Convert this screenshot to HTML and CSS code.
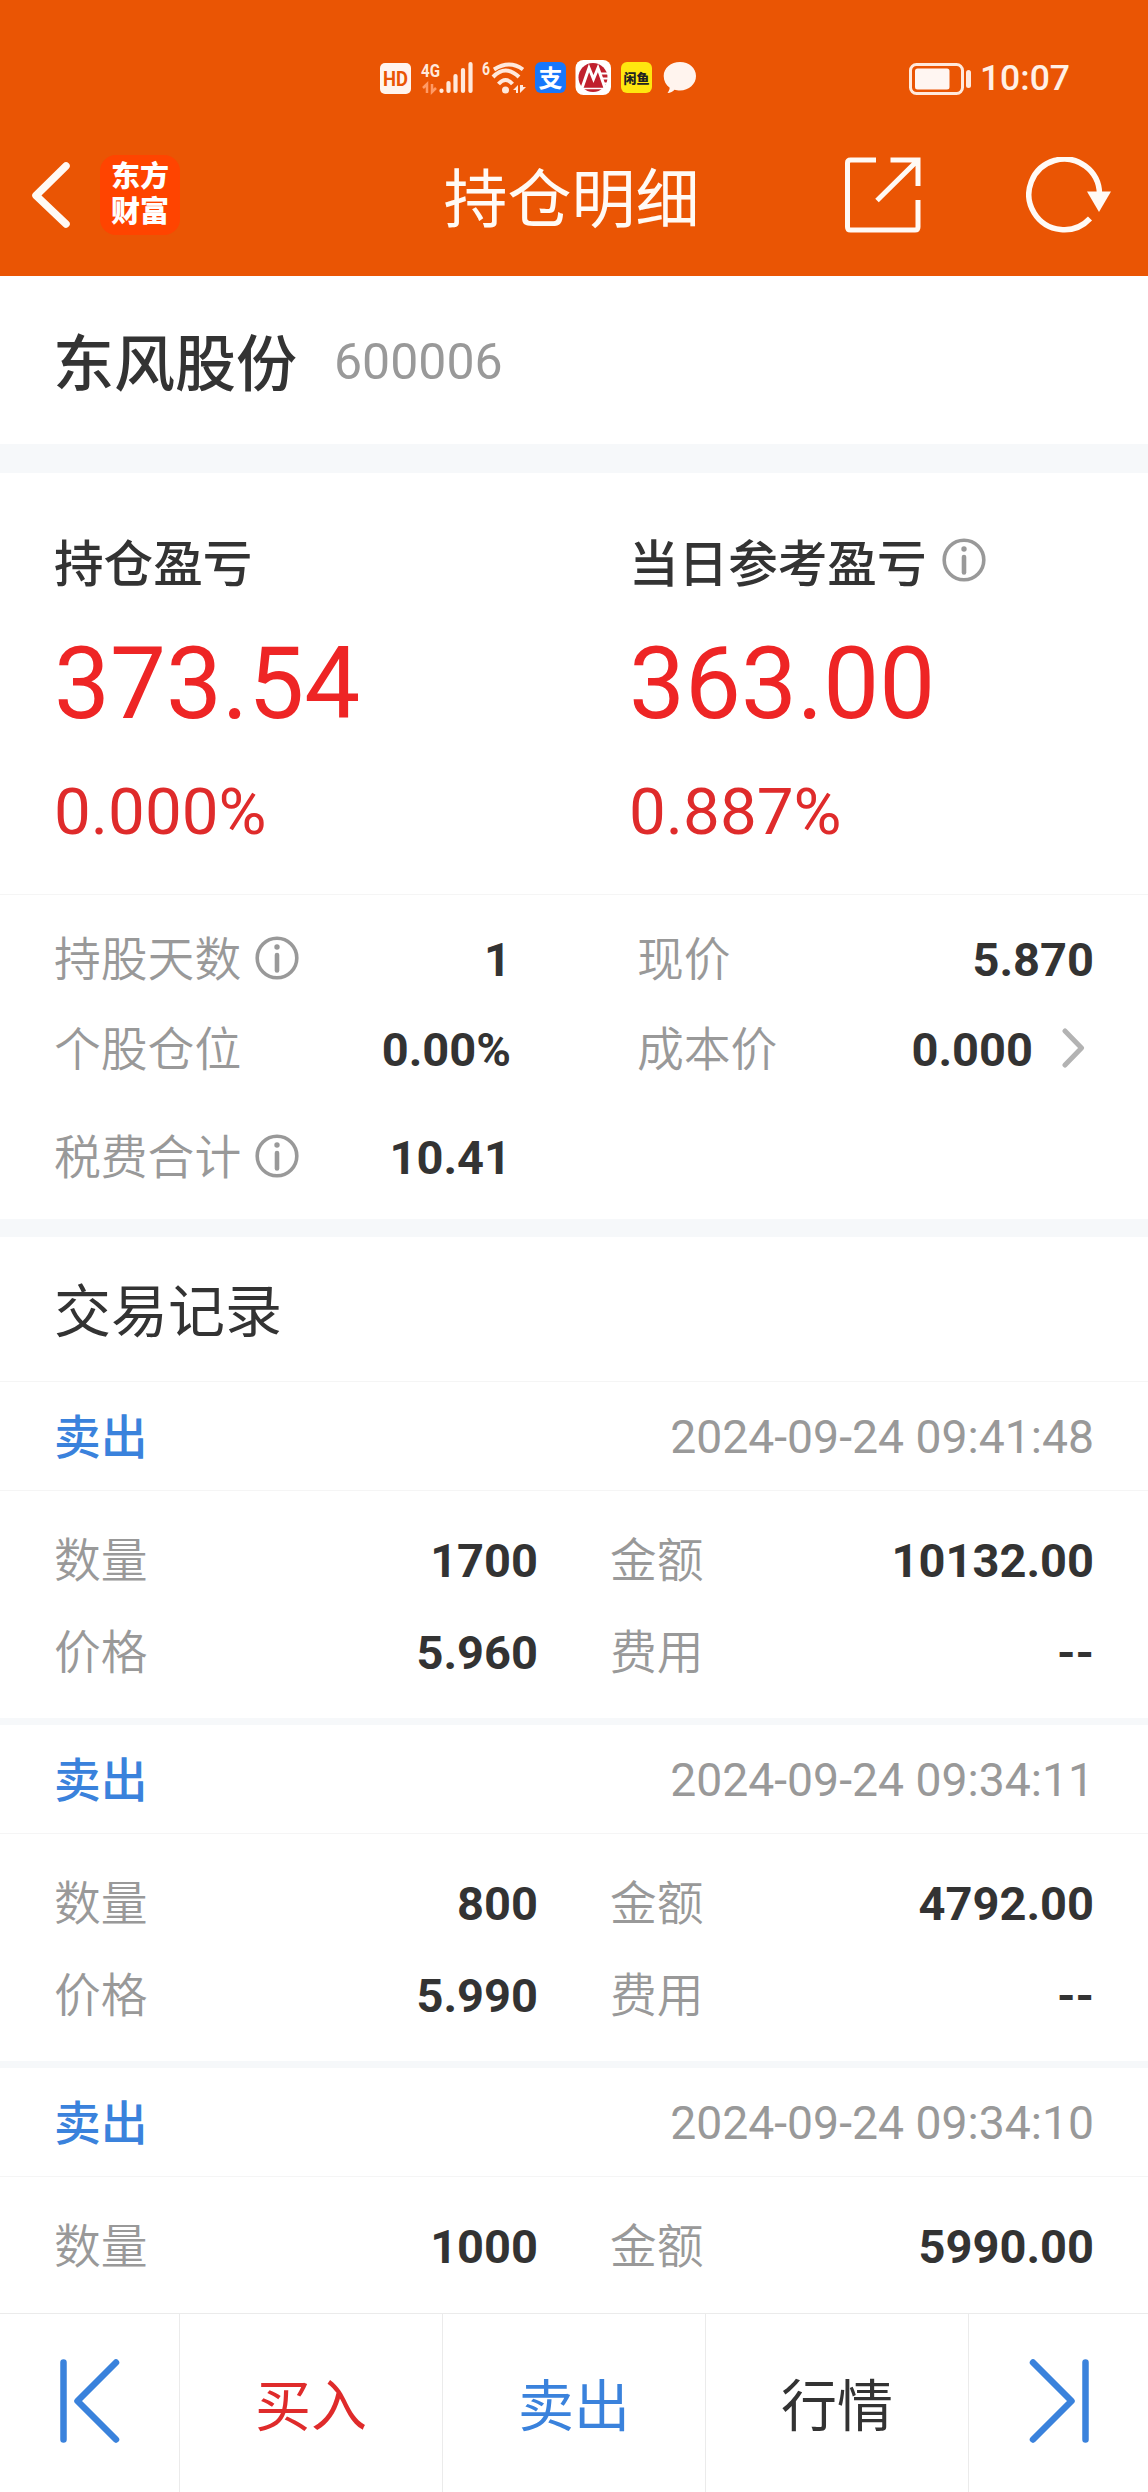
FILE: index.html
```html
<!DOCTYPE html>
<html lang="zh-CN">
<head>
    <meta charset="UTF-8">
    <meta name="viewport" content="width=device-width, initial-scale=1.0">
    <title>持仓明细</title>
    <link rel="stylesheet" href="styles.css">
</head>
<body>
    <header class="header">
        <div class="status-bar">
            <svg class="status-icons" width="320" height="40" viewBox="378 58 320 40">
                <!-- HD -->
                <rect x="380" y="63" width="31" height="31" rx="5" fill="#fff4ee"/>
                <text x="395.5" y="86" class="hd-text" text-anchor="middle" textLength="25" lengthAdjust="spacingAndGlyphs">HD</text>
                <!-- signal -->
                <text x="421" y="76.500" class="net-text" textLength="19" lengthAdjust="spacingAndGlyphs">4G</text>
                <path d="M423 88l4-4v9M432 84v8l4-4" fill="none" stroke="#ff9a66" stroke-width="2.500"/>
                <g stroke="#ffe9dc" stroke-width="4.200" stroke-linecap="round">
                    <path d="M441.500 90.500v.5M448.500 83v8M455.500 76v15M463 70v21M470.500 64v27"/>
                </g>
                <!-- wifi -->
                <text x="482" y="74.500" class="net-text" textLength="8" lengthAdjust="spacingAndGlyphs">6</text>
                <g fill="none" stroke="#ffe9dc" stroke-width="4">
                    <path d="M494 69.500q15.500-10 29 0M493 77q12.500-13 26 0M498.500 84q7-8 14 0"/>
                </g>
                <circle cx="505.500" cy="90" r="3.500" fill="#ffe9dc"/>
                <path d="M513 90l5-5v8h-2v-3zM520 85v8l6-6h-3v-2z" fill="#ffe9dc"/>
                <!-- alipay -->
                <rect x="535" y="62" width="31" height="31" rx="6" fill="#1777fb"/>
                <text x="550.5" y="86.500" class="pay-text" text-anchor="middle">支</text>
                <!-- bank -->
                <rect x="575.500" y="60" width="35.500" height="35" rx="8" fill="#fff"/>
                <circle cx="593" cy="77.500" r="14.500" fill="#c0202e"/>
                <path d="M582 88l7-20 4.500 11 4.500-11 7 20" fill="none" stroke="#fff" stroke-width="3"/>
                <path d="M601 73.500h8M602 78.500h8M603 83.500h7" stroke="#fff" stroke-width="1.800"/>
                <path d="M580 88.500h26" stroke="#fff" stroke-width="1.500"/>
                <!-- xianyu -->
                <rect x="621" y="62" width="31" height="31" rx="6" fill="#ffe60f"/>
                <text x="636.5" y="82.500" class="fish-text" text-anchor="middle">闲鱼</text>
                <!-- message -->
                <path d="M680 62c9 0 16 6 16 14s-7 14.500-16 14.500c-2 0-4-.3-5.500-.8-1.500 1.600-4 3.300-7 3.300 1.200-1.600 2-3.300 2.200-5.300-3.700-2.700-6-6.600-6-11.700 0-8 7.300-14 16.300-14z" fill="#fff4ee"/>
            </svg>
            <div class="status-right">
                <svg width="64" height="34" viewBox="908 61 64 34">
                    <rect x="910.500" y="63.500" width="52" height="29" rx="6" fill="none" stroke="#ffe9dc" stroke-width="3"/>
                    <rect x="915" y="67.500" width="34.500" height="21" rx="2.500" fill="#fff6f2"/>
                    <rect x="966" y="69" width="5" height="18" rx="2.500" fill="#ffe9dc"/>
                </svg>
                <span class="clock">10:07</span>
            </div>
        </div>
        <div class="nav-bar">
            <div class="nav-left">
                <svg width="40" height="68" viewBox="0 0 40 68">
                    <path d="M35 5L5 34.500 35 63" fill="none" stroke="#fffaf5" stroke-width="7.500" stroke-linecap="round" stroke-linejoin="round"/>
                </svg>
                <div class="logo"><span>东方</span><span>财富</span></div>
            </div>
            <h1 class="nav-title">持仓明细</h1>
            <div class="nav-actions">
                <svg width="76" height="76" viewBox="0 0 76 76" fill="none" stroke="#fffaf5" stroke-width="5">
                    <path d="M31 3H5.500Q2.500 3 2.500 6v64q0 3 3 3h64.500q3 0 3-3V43"/>
                    <path d="M45.500 3H73v26M71.500 4.500L32 43.500"/>
                </svg>
                <svg width="86" height="76" viewBox="0 0 86 76">
                    <path d="M64 61.500A35.300 35.300 0 1 1 73.500 37" fill="none" stroke="#fffaf5" stroke-width="5.500"/>
                    <path d="M61 34.500h24L73 55z" fill="#fffaf5"/>
                </svg>
            </div>
        </div>
    </header>

    <section class="stock">
        <span class="stock-name">东风股份</span>
        <span class="stock-code">600006</span>
    </section>

    <section class="summary">
        <div class="profit">
            <div class="profit-item">
                <div class="profit-label">持仓盈亏</div>
                <div class="profit-value">373.54</div>
                <div class="profit-percent">0.000%</div>
            </div>
            <div class="profit-item">
                <div class="profit-label">当日参考盈亏
                    <svg class="info" viewBox="0 0 44 44"><circle cx="22" cy="22" r="19.800"/><path d="M22 19v15.500"/><circle class="dot" cx="22" cy="11" r="2.700"/></svg>
                </div>
                <div class="profit-value">363.00</div>
                <div class="profit-percent">0.887%</div>
            </div>
        </div>
        <div class="metrics">
            <div class="metric">
                <span class="label">持股天数</span>
                <svg class="info" viewBox="0 0 44 44"><circle cx="22" cy="22" r="19.800"/><path d="M22 19v15.500"/><circle class="dot" cx="22" cy="11" r="2.700"/></svg>
                <span class="value">1</span>
            </div>
            <div class="metric">
                <span class="label">现价</span>
                <span class="value">5.870</span>
            </div>
            <div class="metric">
                <span class="label">个股仓位</span>
                <span class="value">0.00%</span>
            </div>
            <div class="metric">
                <span class="label">成本价</span>
                <span class="value">0.000</span>
                <svg class="arrow" width="24" height="40" viewBox="0 0 24 40">
                    <path d="M3 3l16.500 17L3 37" fill="none" stroke="#b3b3b3" stroke-width="5" stroke-linecap="round" stroke-linejoin="round"/>
                </svg>
            </div>
            <div class="metric metric-fee">
                <span class="label">税费合计</span>
                <svg class="info" viewBox="0 0 44 44"><circle cx="22" cy="22" r="19.800"/><path d="M22 19v15.500"/><circle class="dot" cx="22" cy="11" r="2.700"/></svg>
                <span class="value">10.41</span>
            </div>
        </div>
    </section>

    <main class="records">
        <h2 class="records-title">交易记录</h2>

        <article class="record">
            <div class="record-head">
                <span class="side">卖出</span>
                <span class="time">2024-09-24 09:41:48</span>
            </div>
            <div class="record-body">
                <div class="field"><span class="label">数量</span><span class="value">1700</span></div>
                <div class="field"><span class="label">金额</span><span class="value">10132.00</span></div>
                <div class="field"><span class="label">价格</span><span class="value">5.960</span></div>
                <div class="field"><span class="label">费用</span><span class="value">--</span></div>
            </div>
        </article>

        <article class="record">
            <div class="record-head">
                <span class="side">卖出</span>
                <span class="time">2024-09-24 09:34:11</span>
            </div>
            <div class="record-body">
                <div class="field"><span class="label">数量</span><span class="value">800</span></div>
                <div class="field"><span class="label">金额</span><span class="value">4792.00</span></div>
                <div class="field"><span class="label">价格</span><span class="value">5.990</span></div>
                <div class="field"><span class="label">费用</span><span class="value">--</span></div>
            </div>
        </article>

        <article class="record">
            <div class="record-head">
                <span class="side">卖出</span>
                <span class="time">2024-09-24 09:34:10</span>
            </div>
            <div class="record-body">
                <div class="field"><span class="label">数量</span><span class="value">1000</span></div>
                <div class="field"><span class="label">金额</span><span class="value">5990.00</span></div>
            </div>
        </article>
    </main>

    <footer class="toolbar">
        <div class="tool">
            <svg width="60" height="84" viewBox="0 0 60 84">
                <path d="M3.500 3.500v77M56 3.500L17.500 42 56 80.500"/>
            </svg>
        </div>
        <div class="tool buy">买入</div>
        <div class="tool sell">卖出</div>
        <div class="tool">行情</div>
        <div class="tool">
            <svg width="60" height="84" viewBox="0 0 60 84">
                <path d="M56.500 3.500v77M4 3.500L42.500 42 4 80.500"/>
            </svg>
        </div>
    </footer>
</body>
</html>
```

FILE: styles.css
```css
:root {
    --brand: #ea5504;
    --text-primary: #333333;
    --text-secondary: #999999;
    --red: #ee2525;
    --blue: #3a82dc;
    --band: #f6f8fa;
    --line: #f5f5f5;
    --cjk: 'Noto Sans CJK SC', sans-serif;
    --num: Roboto, 'Noto Sans CJK SC', sans-serif;
}

* {
    box-sizing: border-box;
}

body {
    margin: 0;
    height: 2492px;
    display: flex;
    flex-direction: column;
    overflow: hidden;
    background-color: #ffffff;
    color: var(--text-primary);
    font-family: var(--cjk);
    line-height: 1;
}

svg {
    display: block;
    flex: none;
}

/* header */
.header {
    flex: none;
    height: 276px;
    background-color: var(--brand);
    color: #fffaf5;
}

.status-bar {
    height: 120px;
    padding: 58px 78px 0 378px;
    display: flex;
    justify-content: space-between;
    align-items: flex-start;
}

.hd-text {
    font: 700 21px Roboto, sans-serif;
    fill: var(--brand);
}

.net-text {
    font: 700 19px Roboto, sans-serif;
    fill: #ffe9dc;
}

.pay-text {
    font: 700 24px var(--cjk);
    fill: #ffffff;
}

.fish-text {
    font: 900 13px var(--cjk);
    fill: #222222;
}

.status-right {
    display: flex;
    align-items: center;
    gap: 8px;
    height: 41px;
}

.clock {
    font: 500 35.5px/1 var(--num);
    color: #fff0e6;
}

.nav-bar {
    height: 150px;
    padding: 0 36px 0 31px;
    display: grid;
    grid-template-columns: 1fr auto 1fr;
    align-items: center;
}

.nav-left {
    display: flex;
    align-items: center;
    gap: 29px;
}

.logo {
    width: 80px;
    height: 80px;
    border-radius: 16px;
    background-color: #ff4400;
    display: flex;
    flex-direction: column;
    align-items: center;
    justify-content: center;
    font-family: 'Liberation Sans', 'Noto Sans CJK SC', sans-serif;
    font-size: 29px;
    font-weight: 900;
    color: #ffffff;
}

.logo span {
    height: 35px;
    line-height: 35px;
}

.nav-title {
    margin: 0;
    padding-bottom: 3px;
    font-size: 64px;
    font-weight: 400;
}

.nav-actions {
    display: flex;
    justify-content: flex-end;
    gap: 105px;
}

/* stock */
.stock {
    flex: none;
    height: 168px;
    padding: 0 53px;
    display: flex;
    align-items: center;
    gap: 37px;
}

.stock-name {
    padding-bottom: 2px;
    font-size: 61px;
    font-weight: 500;
}

.stock-code {
    padding-top: 4px;
    font-family: var(--num);
    font-size: 50px;
    color: var(--text-secondary);
}

/* summary */
.summary {
    flex: none;
    height: 793px;
    border-top: 29px solid var(--band);
    border-bottom: 18px solid var(--band);
}

.profit {
    height: 422px;
    padding: 62px 0 0 54px;
    display: grid;
    grid-template-columns: 575px 1fr;
    border-bottom: 1px solid var(--line);
}

.profit-label {
    display: flex;
    align-items: center;
    gap: 15px;
    font-size: 49.6px;
    font-weight: 500;
    line-height: 50px;
}

.profit-value {
    margin-top: 49px;
    font: 400 99.6px/100px var(--num);
    color: var(--red);
}

.profit-percent {
    margin-top: 45px;
    font: 400 65.5px/1 var(--num);
    color: #df2b2b;
}

.info {
    width: 44px;
    height: 44px;
    fill: none;
    stroke: var(--text-secondary);
    stroke-width: 3.6;
    stroke-linecap: round;
}

.info path {
    stroke-width: 4.6;
}

.info .dot {
    fill: var(--text-secondary);
    stroke: none;
}

.metrics {
    padding: 18px 54px 0 54px;
    display: grid;
    grid-template-columns: 457px 457px;
    justify-content: space-between;
}

.metric {
    height: 90px;
    display: flex;
    align-items: center;
}

.metric-fee {
    margin-top: 18px;
}

.metric .info {
    margin-left: 14px;
}

.label {
    padding-bottom: 3px;
    font-size: 46.8px;
    font-weight: 350;
    color: var(--text-secondary);
}

.value {
    margin-left: auto;
    padding-top: 2px;
    font-family: var(--num);
    font-size: 47px;
    font-weight: 700;
}

.arrow {
    margin: 0 8px 0 29px;
}

/* records */
.records {
    flex: 1;
    min-height: 0;
    overflow: hidden;
}

.records-title {
    margin: 0;
    height: 145px;
    padding: 0 0 3px 54px;
    display: flex;
    align-items: center;
    font-size: 57px;
    font-weight: 400;
    border-bottom: 1px solid var(--line);
}

.record {
    height: 343px;
    border-bottom: 7px solid var(--band);
}

.record-head {
    height: 109px;
    padding: 0 54px 0 54px;
    display: flex;
    align-items: center;
    justify-content: space-between;
    border-bottom: 1px solid var(--line);
}

.side {
    padding-bottom: 3px;
    font-size: 46.8px;
    font-weight: 500;
    color: var(--blue);
}

.time {
    padding-top: 3px;
    font-family: var(--num);
    font-size: 46.3px;
    color: var(--text-secondary);
}

.record-body {
    padding: 22px 54px 0 54px;
    display: grid;
    grid-template-columns: 484px 484px;
    justify-content: space-between;
}

.field {
    height: 92px;
    display: flex;
    align-items: center;
}

/* toolbar */
.toolbar {
    flex: none;
    height: 179px;
    display: grid;
    grid-template-columns: 180px 263px 263px 263px 1fr;
    background-color: #ffffff;
    border-top: 1px solid #ebebeb;
}

.tool {
    display: flex;
    align-items: center;
    justify-content: center;
    padding-bottom: 2px;
    font-size: 56px;
    border-right: 1px solid #ebebeb;
}

.tool:last-child {
    border-right: none;
}

.tool svg {
    margin-bottom: 3px;
    fill: none;
    stroke: var(--blue);
    stroke-width: 6.5;
    stroke-linecap: round;
    stroke-linejoin: round;
}

.buy {
    color: #df2b2b;
}

.sell {
    color: var(--blue);
}
```
